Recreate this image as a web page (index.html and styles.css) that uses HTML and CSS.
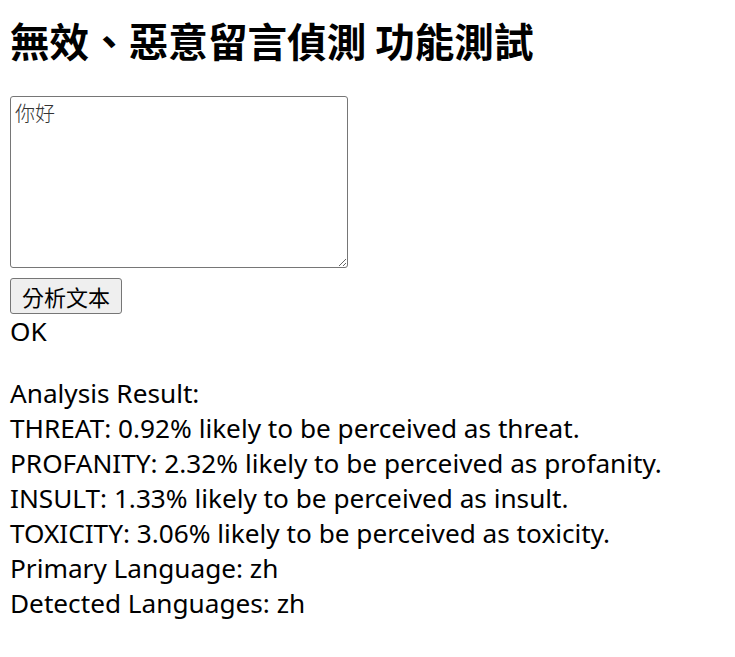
FILE: index.html
```html
<!DOCTYPE html>
<html lang="zh-Hant">
<head>
<meta charset="utf-8">
<title>無效、惡意留言偵測 功能測試</title>
<link rel="stylesheet" href="styles.css">
</head>
<body>
<h1 class="title">無效、惡意留言偵測 功能測試</h1>
<form class="form">
<textarea class="input">你好</textarea>
<button type="button" class="btn">分析文本</button>
</form>
<div class="status">OK</div>
<div class="result">
<div class="line">Analysis Result:</div>
<div class="line">THREAT: 0.92% likely to be perceived as threat.</div>
<div class="line">PROFANITY: 2.32% likely to be perceived as profanity.</div>
<div class="line">INSULT: 1.33% likely to be perceived as insult.</div>
<div class="line">TOXICITY: 3.06% likely to be perceived as toxicity.</div>
<div class="line">Primary Language: zh</div>
<div class="line">Detected Languages: zh</div>
</div>
</body>
</html>
```
FILE: styles.css
```css
html, body {
  margin: 0;
  padding: 0;
  background: #ffffff;
}
body {
  padding: 0 10px;
  font-family: "Noto Sans", "Noto Sans CJK TC", sans-serif;
  font-size: 26.2px;
  color: #000000;
}
.title {
  margin: 16px 0 32px 0;
  font-family: "Noto Sans CJK TC", sans-serif;
  font-size: 39.6px;
  line-height: 48px;
  font-weight: 700;
}
.form {
  display: flex;
  flex-direction: column;
  align-items: flex-start;
  gap: 10px;
}
.input {
  box-sizing: border-box;
  width: 338px;
  height: 172px;
  margin: 0;
  padding: 3px 4px;
  border: 1px solid #767676;
  border-radius: 3px;
  font-family: "Noto Sans CJK TC", sans-serif;
  font-size: 20px;
  line-height: 26px;
  font-weight: 300;
  color: #333333;
  resize: both;
}
.btn {
  box-sizing: border-box;
  height: 36px;
  margin: 0;
  padding: 0 11px;
  background: #efefef;
  border: 1px solid #767676;
  border-radius: 3px;
  font-family: "Noto Sans CJK TC", sans-serif;
  font-size: 22px;
  line-height: 30px;
  color: #000000;
}
.status {
  line-height: 35px;
  margin-bottom: 27px;
}
.line {
  line-height: 35px;
}
```
